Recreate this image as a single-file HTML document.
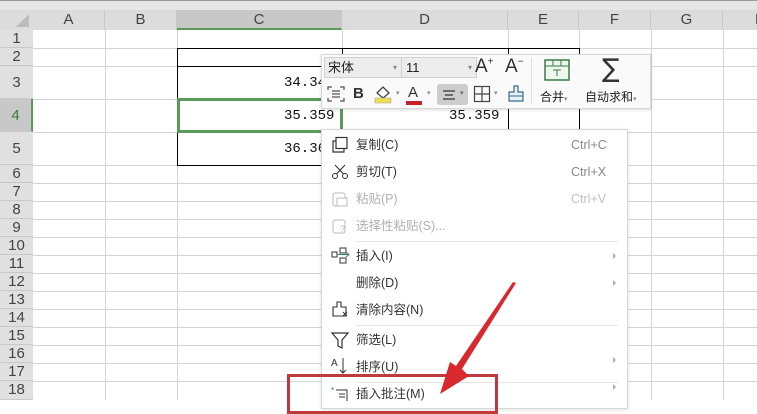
<!DOCTYPE html>
<html><head><meta charset="utf-8"><style>
*{margin:0;padding:0;box-sizing:border-box}
body{width:757px;height:400px;overflow:hidden;background:#fff;position:relative;font-family:"Liberation Sans","Noto Sans CJK SC",sans-serif}
.a{position:absolute}
.vl{position:absolute;width:1px;background:#d4d4d4}
.hl{position:absolute;height:1px;background:#d4d4d4}
.ch{position:absolute;top:10px;height:20px;font-size:15px;color:#444;text-align:center;line-height:20px;border-right:1px solid #c8c8c8}
.rh{position:absolute;left:0;width:33px;font-size:15px;color:#444;text-align:center;background:#e0e0e0;border-bottom:1px solid #c8c8c8}
.num{position:absolute;font-family:"Liberation Mono",monospace;font-size:14px;color:#111}
.mi{position:absolute;left:356px;font-size:12.5px;line-height:16px;color:#333}
.dis{color:#b0b0b0}
.sc{position:absolute;left:571px;font-size:12.5px;line-height:16px;color:#888}
.arr{position:absolute;left:613px;width:0;height:0;border-left:3px solid #aaa;border-top:3px solid transparent;border-bottom:3px solid transparent}
.sep{position:absolute;left:356px;width:262px;height:1px;background:#e6e6e6}
</style></head><body>
<div class="a" style="left:0;top:0;width:757px;height:10px;background:#e6e6e6;border-top:1px solid #999"></div>
<div class="a" style="left:0;top:10px;width:757px;height:20px;background:#dcdcdc"></div>
<div class="a" style="left:0;top:30px;width:33px;height:370px;background:#e0e0e0"></div>
<div class="a" style="left:16px;top:14px;width:0;height:0;border-left:13px solid transparent;border-bottom:13px solid #bcbcbc"></div>
<div class="ch" style="left:33px;width:72px">A</div>
<div class="ch" style="left:105px;width:72px">B</div>
<div class="ch" style="left:177px;width:165px;background:#c8c8c8;border-bottom:2px solid #5a9a5a">C</div>
<div class="ch" style="left:342px;width:166px">D</div>
<div class="ch" style="left:508px;width:71px">E</div>
<div class="ch" style="left:579px;width:72px">F</div>
<div class="ch" style="left:651px;width:72px">G</div>
<div class="ch" style="left:723px;width:40px;text-align:left;padding-left:32px">H</div>
<div class="vl" style="left:105px;top:30px;height:370px"></div>
<div class="vl" style="left:177px;top:30px;height:370px"></div>
<div class="vl" style="left:342px;top:30px;height:370px"></div>
<div class="vl" style="left:508px;top:30px;height:370px"></div>
<div class="vl" style="left:579px;top:30px;height:370px"></div>
<div class="vl" style="left:651px;top:30px;height:370px"></div>
<div class="vl" style="left:723px;top:30px;height:370px"></div>
<div class="hl" style="left:33px;top:48px;width:724px"></div>
<div class="hl" style="left:33px;top:66px;width:724px"></div>
<div class="hl" style="left:33px;top:99px;width:724px"></div>
<div class="hl" style="left:33px;top:132px;width:724px"></div>
<div class="hl" style="left:33px;top:165px;width:724px"></div>
<div class="hl" style="left:33px;top:183px;width:724px"></div>
<div class="hl" style="left:33px;top:201px;width:724px"></div>
<div class="hl" style="left:33px;top:219px;width:724px"></div>
<div class="hl" style="left:33px;top:237px;width:724px"></div>
<div class="hl" style="left:33px;top:255px;width:724px"></div>
<div class="hl" style="left:33px;top:273px;width:724px"></div>
<div class="hl" style="left:33px;top:291px;width:724px"></div>
<div class="hl" style="left:33px;top:309px;width:724px"></div>
<div class="hl" style="left:33px;top:327px;width:724px"></div>
<div class="hl" style="left:33px;top:345px;width:724px"></div>
<div class="hl" style="left:33px;top:363px;width:724px"></div>
<div class="hl" style="left:33px;top:381px;width:724px"></div>
<div class="rh" style="top:30px;height:18px;line-height:18px">1</div>
<div class="rh" style="top:48px;height:18px;line-height:18px">2</div>
<div class="rh" style="top:66px;height:33px;line-height:33px">3</div>
<div class="rh" style="top:99px;height:33px;line-height:33px;background:#c8c8c8;color:#3a7a3a;border-right:2px solid #5a9a5a">4</div>
<div class="rh" style="top:132px;height:33px;line-height:33px">5</div>
<div class="rh" style="top:165px;height:18px;line-height:18px">6</div>
<div class="rh" style="top:183px;height:18px;line-height:18px">7</div>
<div class="rh" style="top:201px;height:18px;line-height:18px">8</div>
<div class="rh" style="top:219px;height:18px;line-height:18px">9</div>
<div class="rh" style="top:237px;height:18px;line-height:18px">10</div>
<div class="rh" style="top:255px;height:18px;line-height:18px">11</div>
<div class="rh" style="top:273px;height:18px;line-height:18px">12</div>
<div class="rh" style="top:291px;height:18px;line-height:18px">13</div>
<div class="rh" style="top:309px;height:18px;line-height:18px">14</div>
<div class="rh" style="top:327px;height:18px;line-height:18px">15</div>
<div class="rh" style="top:345px;height:18px;line-height:18px">16</div>
<div class="rh" style="top:363px;height:18px;line-height:18px">17</div>
<div class="rh" style="top:381px;height:19px;line-height:18px">18</div>
<div class="a" style="left:177px;top:48px;width:403px;height:118px;border:1px solid #000"></div>
<div class="a" style="left:342px;top:48px;width:1px;height:118px;background:#000"></div>
<div class="a" style="left:508px;top:48px;width:1px;height:118px;background:#000"></div>
<div class="a" style="left:177px;top:66px;width:403px;height:1px;background:#000"></div>
<div class="a" style="left:177px;top:99px;width:403px;height:1px;background:#000"></div>
<div class="a" style="left:177px;top:132px;width:403px;height:1px;background:#000"></div>
<div class="num" style="left:284px;top:75px">34.34</div>
<div class="num" style="left:284px;top:108px">35.359</div>
<div class="num" style="left:449px;top:108px">35.359</div>
<div class="num" style="left:284px;top:141px">36.36</div>
<div class="a" style="left:177px;top:98px;width:166px;height:35px;border:3px solid #5a9a5a"></div>
<!-- toolbar -->
<div class="a" style="left:321px;top:54px;width:330px;height:55px;background:#fafafa;border:1px solid #d8d8d8;box-shadow:0 1px 3px rgba(0,0,0,.15)"></div>
<div class="a" style="left:324px;top:57px;width:78px;height:21px;background:#ececec;border:1px solid #d0d0d0;font-size:13px;line-height:19px;padding-left:3px;color:#222">宋体<span style="position:absolute;right:4px;font-size:8px;color:#888">▾</span></div>
<div class="a" style="left:401px;top:57px;width:76px;height:21px;background:#ececec;border:1px solid #d0d0d0;font-size:13px;line-height:19px;padding-left:4px;color:#222">11<span style="position:absolute;right:4px;font-size:8px;color:#888">▾</span></div>
<div class="a" style="left:475px;top:56px;font-size:19px;color:#333">A<sup style="font-size:10px">+</sup></div>
<div class="a" style="left:505px;top:56px;font-size:19px;color:#333">A<sup style="font-size:10px">−</sup></div>
<div class="a" style="left:531px;top:58px;width:1px;height:46px;background:#e0e0e0"></div>
<svg class="a" style="left:544px;top:59px" width="26" height="22"><rect x="1" y="1" width="24" height="20" fill="#eef7ee" stroke="#3a7a4a" stroke-width="1.5"/><line x1="1" y1="7" x2="25" y2="7" stroke="#3a7a4a"/><line x1="9" y1="1" x2="9" y2="7" stroke="#3a7a4a"/><line x1="17" y1="1" x2="17" y2="7" stroke="#3a7a4a"/><path d="M9 11h8M13 11v6" stroke="#3a7a4a"/></svg>
<div class="a" style="left:540px;top:88px;font-size:12px;color:#222">合并<span style="font-size:7px;color:#888">▾</span></div>
<div class="a" style="left:602px;top:54px;font-size:26px;color:#333;font-family:'DejaVu Sans',sans-serif">∑</div>
<div class="a" style="left:585px;top:88px;font-size:12px;color:#222">自动求和<span style="font-size:7px;color:#888">▾</span></div>
<svg class="a" style="left:326px;top:85px" width="20" height="18"><path d="M2 5V2h4M14 2h4v3M2 13v3h4M14 16h4v-3" stroke="#555" fill="none" stroke-width="1.3"/><path d="M6 6h8M6 9h8M6 12h8" stroke="#555" stroke-width="1.2"/></svg>
<div class="a" style="left:353px;top:85px;font-size:15px;font-weight:bold;color:#333">B</div>
<svg class="a" style="left:373px;top:84px" width="22" height="20"><path d="M4 9l6-6 6 6-6 5z" fill="none" stroke="#444" stroke-width="1.3"/><rect x="2" y="14" width="16" height="5" fill="#f0e050" stroke="#999" stroke-width=".5"/></svg>
<div class="a" style="left:396px;top:89px;font-size:7px;color:#888">▾</div>
<div class="a" style="left:408px;top:84px;font-size:15px;color:#333">A</div>
<div class="a" style="left:406px;top:101px;width:16px;height:4px;background:#c8202a"></div>
<div class="a" style="left:427px;top:89px;font-size:7px;color:#888">▾</div>
<div class="a" style="left:437px;top:84px;width:31px;height:21px;background:#cdcdcd;border-radius:3px"></div>
<svg class="a" style="left:441px;top:88px" width="16" height="14"><path d="M2 3h12M4 7h8M2 11h12" stroke="#333" stroke-width="1.3"/></svg>
<div class="a" style="left:460px;top:89px;font-size:7px;color:#666">▾</div>
<svg class="a" style="left:473px;top:85px" width="18" height="18"><rect x="1.5" y="1.5" width="15" height="15" fill="none" stroke="#444" stroke-width="1.2"/><path d="M9 1.5v15M1.5 9h15" stroke="#444" stroke-width="1.2"/></svg>
<div class="a" style="left:494px;top:89px;font-size:7px;color:#888">▾</div>
<svg class="a" style="left:506px;top:84px" width="20" height="20"><path d="M8 2h4v6h5v9H3V8h5z" fill="#e6f0f6" stroke="#3a6a8a" stroke-width="1.2"/><path d="M3 12h14" stroke="#3a6a8a"/></svg>
<!-- context menu -->
<div class="a" style="left:321px;top:129px;width:307px;height:280px;background:#fff;border:1px solid #d8d8d8;box-shadow:0 1px 4px rgba(0,0,0,.12)"></div>
<svg class="a" style="left:331px;top:136px" width="18" height="18"><rect x="5" y="1.5" width="11" height="11" fill="none" stroke="#333" stroke-width="1.2"/><path d="M5 5H2v11h11v-3" fill="none" stroke="#333" stroke-width="1.2"/></svg>
<div class="mi" style="top:137px">复制(C)</div><div class="sc" style="top:137px">Ctrl+C</div>
<svg class="a" style="left:331px;top:164px" width="18" height="16"><circle cx="4" cy="12" r="2.5" fill="none" stroke="#333"/><circle cx="14" cy="12" r="2.5" fill="none" stroke="#333"/><path d="M5.5 10L14 1M12.5 10L4 1" stroke="#333" stroke-width="1.1"/></svg>
<div class="mi" style="top:164px">剪切(T)</div><div class="sc" style="top:164px">Ctrl+X</div>
<svg class="a" style="left:331px;top:190px" width="18" height="18"><rect x="2" y="3" width="12" height="13" rx="2" fill="none" stroke="#bbb"/><rect x="6" y="8" width="10" height="8" fill="#fff" stroke="#bbb"/></svg>
<div class="mi dis" style="top:191px">粘贴(P)</div><div class="sc" style="top:191px;color:#c0c0c0">Ctrl+V</div>
<svg class="a" style="left:331px;top:217px" width="18" height="18"><rect x="2" y="3" width="12" height="13" rx="2" fill="none" stroke="#bbb"/><text x="9" y="15" font-size="9" fill="#bbb">?</text></svg>
<div class="mi dis" style="top:218px">选择性粘贴(S)...</div>
<div class="sep" style="top:241px"></div>
<svg class="a" style="left:331px;top:247px" width="20" height="18"><rect x="1" y="5" width="5" height="5" fill="none" stroke="#333"/><rect x="9" y="1" width="6" height="5" fill="none" stroke="#333"/><rect x="9" y="11" width="6" height="5" fill="none" stroke="#333"/><path d="M6 7.5h12M15 5l3 2.5-3 2.5" fill="none" stroke="#3a8a5a"/></svg>
<div class="mi" style="top:248px">插入(I)</div><div class="arr" style="top:253px"></div>
<div class="mi" style="top:275px">删除(D)</div><div class="arr" style="top:280px"></div>
<svg class="a" style="left:331px;top:300px" width="18" height="18"><path d="M6 2h4v5h5v9H2V7h4z" fill="none" stroke="#333" stroke-width="1.1"/><path d="M12 12l4 4M16 12l-4 4" stroke="#333"/></svg>
<div class="mi" style="top:302px">清除内容(N)</div>
<div class="sep" style="top:325px"></div>
<svg class="a" style="left:331px;top:331px" width="18" height="18"><path d="M1 2h16l-6 7v8l-4-2V9z" fill="none" stroke="#333" stroke-width="1.2"/></svg>
<div class="mi" style="top:332px">筛选(L)</div>
<svg class="a" style="left:331px;top:357px" width="18" height="20"><text x="0" y="9" font-size="10" fill="#333">A</text><path d="M12 1v15M9 13l3 3 3-3M2 18h7" stroke="#333" fill="none"/></svg>
<div class="mi" style="top:359px">排序(U)</div><div class="arr" style="top:357px"></div>
<div class="sep" style="top:382px"></div>
<svg class="a" style="left:331px;top:387px" width="18" height="14"><text x="0" y="6" font-size="8" fill="#3a8a5a">*</text><path d="M5 3h11v11M8 7h6M8 10h6" stroke="#333" fill="none"/></svg>
<div class="mi" style="top:386px">插入批注(M)</div><div class="arr" style="top:384px"></div>
<div class="a" style="left:287px;top:374px;width:211px;height:40px;border:3px solid #c0393c"></div>
<svg class="a" style="left:0;top:0" width="757" height="400"><path d="M516 283 L462 369 L469 376 L440 394 L450 362 L456 366 L513 282 Z" fill="#d82a2e"/></svg>
</body></html>
